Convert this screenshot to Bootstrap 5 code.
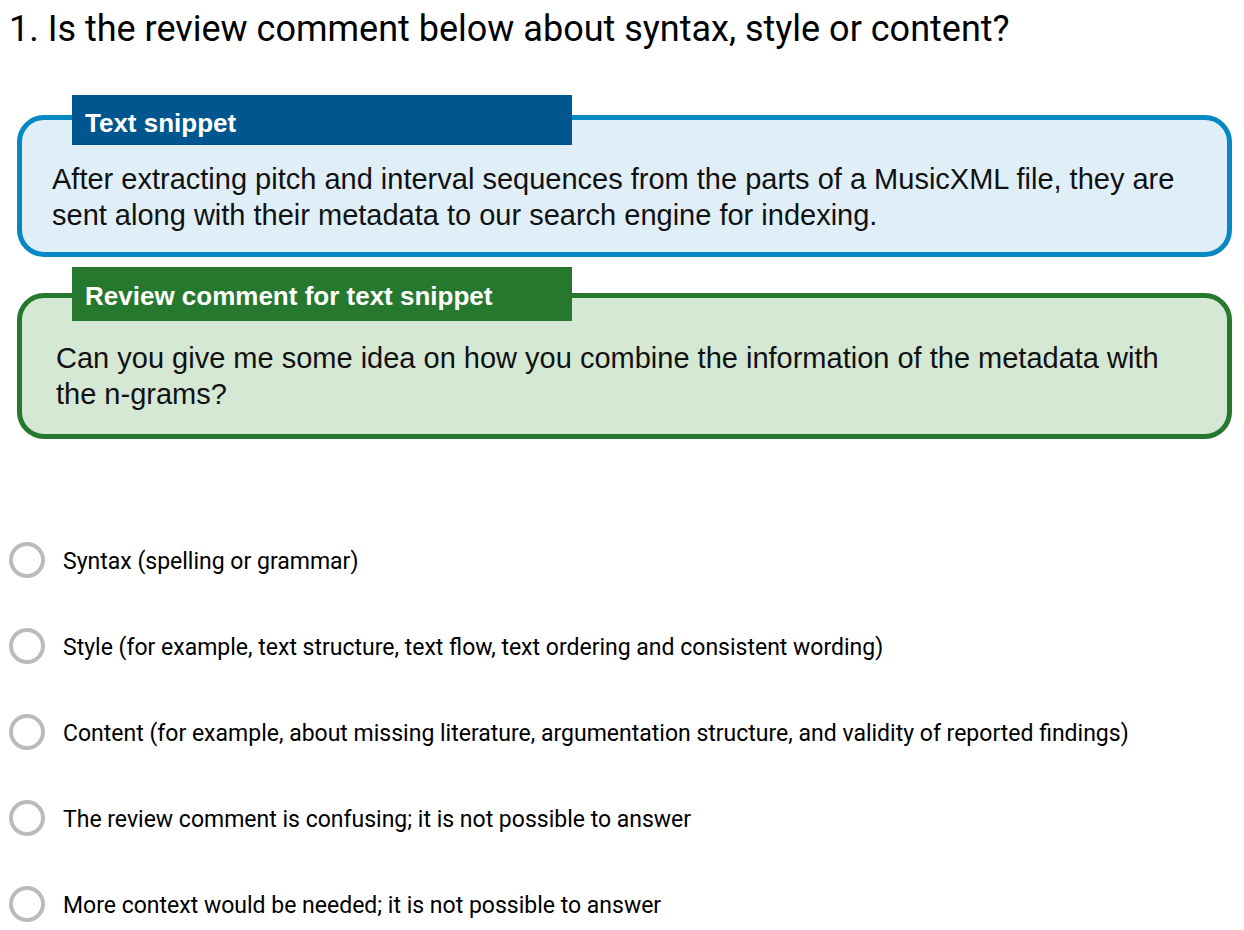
<!DOCTYPE html>
<html lang="en">
<head>
<meta charset="utf-8">
<meta name="viewport" content="width=device-width, initial-scale=1">
<title>Review comment survey</title>
<link href="https://cdn.jsdelivr.net/npm/bootstrap@5.3.0/dist/css/bootstrap.min.css" rel="stylesheet">
<style>
body{font-family:Roboto,sans-serif;color:#000;background:#fff}
.survey{padding:8px 10px 0 9px}
.question{font-size:36px;line-height:42px;font-weight:400}
.panels{padding:0 2px 0 8px;margin-top:65px;gap:36px}
.panel{font-family:"Liberation Sans",sans-serif;font-size:29px;line-height:36px;border:5px solid;border-radius:27px;color:#111}
.panel-title{font-size:26px;font-weight:700;line-height:30px;color:#fff;width:500px;max-width:80%;margin-left:50px;padding:13px}
.snippet{border-color:#0688c4;background:#e0eff7}
.snippet .panel-title{background:#00568f;margin-top:-25px;padding-block:13px 7px}
.review{border-color:#26782f;background:#d5e8d4}
.review .panel-title{background:#26782f;margin-top:-31px;padding-block:14px 10px}
.panel-text{padding:16px 30px 19px}
.review .panel-text{padding:19px 34px 22px}
.options{margin-top:103px;gap:50px}
.choice .form-check-input{width:36px;height:36px;border:4px solid #bbb;margin:0;flex:none}
.choice label{font-size:23px;line-height:28px;padding:3px 0 0 18px}
</style>
</head>
<body>
<main class="survey">
<form>
<h1 class="question mb-0">1. Is the review comment below about syntax, style or content?</h1>
<div class="panels d-flex flex-column">
<section class="panel snippet">
<h2 class="panel-title mb-0">Text snippet</h2>
<p class="panel-text mb-0">After extracting pitch and interval sequences from the parts of a MusicXML file, they are sent along with their metadata to our search engine for indexing.</p>
</section>
<section class="panel review">
<h2 class="panel-title mb-0">Review comment for text snippet</h2>
<p class="panel-text mb-0">Can you give me some idea on how you combine the information of the metadata with the n-grams?</p>
</section>
</div>
<div class="options d-flex flex-column">
<div class="choice d-flex align-items-center"><input class="form-check-input" type="radio" name="category" id="syntax"><label for="syntax">Syntax (spelling or grammar)</label></div>
<div class="choice d-flex align-items-center"><input class="form-check-input" type="radio" name="category" id="style"><label for="style">Style (for example, text structure, text flow, text ordering and consistent wording)</label></div>
<div class="choice d-flex align-items-center"><input class="form-check-input" type="radio" name="category" id="content"><label for="content">Content (for example, about missing literature, argumentation structure, and validity of reported findings)</label></div>
<div class="choice d-flex align-items-center"><input class="form-check-input" type="radio" name="category" id="confusing"><label for="confusing">The review comment is confusing; it is not possible to answer</label></div>
<div class="choice d-flex align-items-center"><input class="form-check-input" type="radio" name="category" id="context"><label for="context">More context would be needed; it is not possible to answer</label></div>
</div>
</form>
</main>
<script src="https://cdn.jsdelivr.net/npm/bootstrap@5.3.0/dist/js/bootstrap.bundle.min.js"></script>
</body>
</html>
